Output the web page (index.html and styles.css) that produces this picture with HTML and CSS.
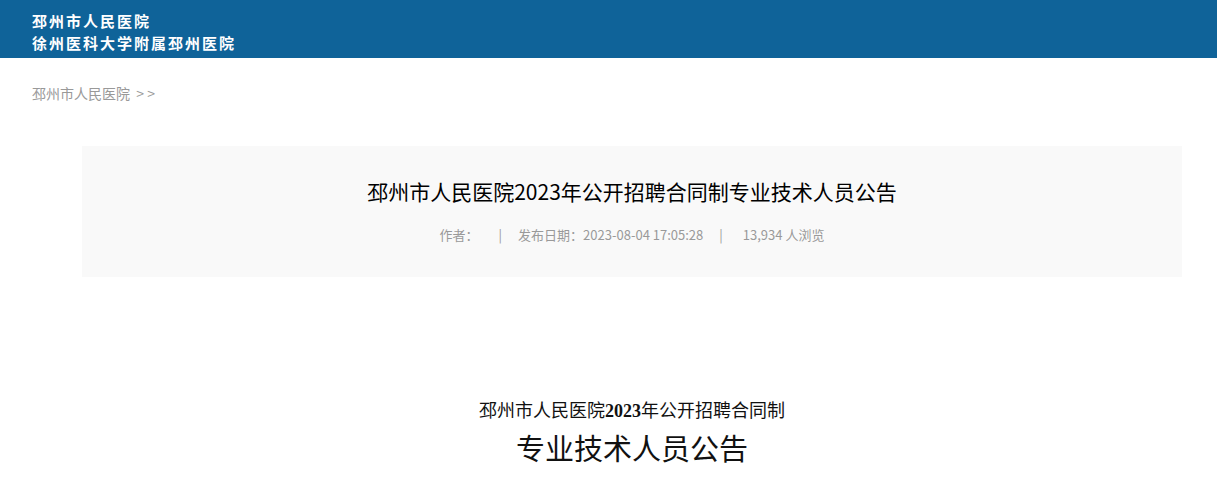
FILE: index.html
```html
<!DOCTYPE html>
<html lang="zh-CN">
<head>
    <meta charset="UTF-8">
    <meta name="viewport" content="width=device-width, initial-scale=1.0">
    <title>邳州市人民医院2023年公开招聘合同制专业技术人员公告</title>
    <link rel="stylesheet" href="styles.css">
</head>
<body>
    <header class="top">
        <div class="logo">
            <span>邳州市人民医院</span>
            <span>徐州医科大学附属邳州医院</span>
        </div>
    </header>

    <div class="crumb">邳州市人民医院&nbsp; &gt; &gt;</div>

    <div class="article">
        <div class="article-head">
            <h1>邳州市人民医院2023年公开招聘合同制专业技术人员公告</h1>
            <div class="meta">
                <span>作者：</span>
                <span class="sep sep-a">|</span>
                <span>发布日期：2023-08-04 17:05:28</span>
                <span class="sep sep-b">|</span>
                <span>13,934 人浏览</span>
            </div>
        </div>

        <div class="article-body">
            <p class="sub">邳州市人民医院<b>2023</b>年公开招聘合同制</p>
            <p class="big">专业技术人员公告</p>
        </div>
    </div>
</body>
</html>
```

FILE: styles.css
```css
body {
    margin: 0;
    font-family: "Noto Sans CJK SC", "Noto Sans", sans-serif;
    background: #fff;
    color: #000;
}

/* 顶部 */
.top {
    height: 58px;
    background: #0f6399;
    display: flex;
    align-items: center;
    padding-left: 32px;
}

.logo {
    display: flex;
    flex-direction: column;
    color: #fff;
    font-size: 15px;
    letter-spacing: 2px;
    font-weight: bold;
    line-height: 22px;
    margin-top: 6px;
}

/* 面包屑 */
.crumb {
    padding: 25px 0 0 32px;
    font-size: 14px;
    line-height: 20px;
    color: #999;
}

/* 文章 */
.article {
    margin-left: 82px;
    width: 1100px;
}

.article-head {
    margin-top: 43px;
    height: 131px;
    background: #f9f9f9;
    text-align: center;
    box-sizing: border-box;
    padding-top: 31px;
}

.article-head h1 {
    margin: 0;
    font-size: 21px;
    font-weight: normal;
    line-height: 28px;
    color: #000;
}

.meta {
    margin-top: 20px;
    display: flex;
    justify-content: center;
    font-size: 13px;
    line-height: 20px;
    color: #999;
    white-space: pre;
}

.meta .sep-a {
    margin: 0 16px 0 20px;
}

.meta .sep-b {
    margin: 0 20px 0 16px;
}

.article-body {
    text-align: center;
    padding-top: 120px;
}

.article-body p {
    margin: 0;
}

.sub {
    font-size: 18px;
    line-height: 24px;
    color: #111;
}

.sub b {
    font-family: "Liberation Serif", serif;
}

.big {
    margin-top: 4px !important;
    font-size: 29px;
    line-height: 40px;
    color: #111;
}
```
